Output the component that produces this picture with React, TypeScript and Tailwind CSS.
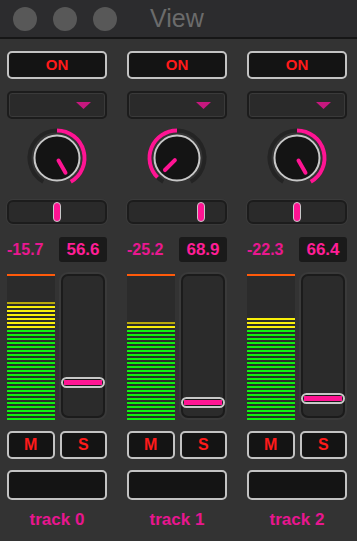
import React from 'react';

type Track = {
  name: string;
  knob: number; // angle in degrees, 0 = top, clockwise
  pan: number; // slider thumb position, 0..1
  level: string;
  gain: string;
  yellow: number;
  dim: boolean;
  fader: number; // thumb top offset in px
};

const tracks: Track[] = [
  { name: 'track 0', knob: 150, pan: 0.5, level: '-15.7', gain: '56.6', yellow: 6, dim: true, fader: 105 },
  { name: 'track 1', knob: -135, pan: 0.745, level: '-25.2', gain: '68.9', yellow: 1, dim: true, fader: 125 },
  { name: 'track 2', knob: 150, pan: 0.5, level: '-22.3', gain: '66.4', yellow: 3, dim: false, fader: 121 },
];

const MAGENTA = '#ff1493';

const polar = (cx: number, cy: number, r: number, a: number) => {
  const rad = (a * Math.PI) / 180;
  return [cx + r * Math.sin(rad), cy - r * Math.cos(rad)];
};

const arc = (cx: number, cy: number, r: number, a1: number, a2: number) => {
  const [x1, y1] = polar(cx, cy, r, a1);
  const [x2, y2] = polar(cx, cy, r, a2);
  const large = Math.abs(a2 - a1) > 180 ? 1 : 0;
  return `M ${x1} ${y1} A ${r} ${r} 0 ${large} 1 ${x2} ${y2}`;
};

const Knob: React.FC<{ angle: number }> = ({ angle }) => {
  const c = 32;
  const from = Math.min(0, angle);
  const to = Math.max(0, angle);
  const [px1, py1] = polar(c, c, 3, angle);
  const [px2, py2] = polar(c, c, 17, angle);
  return (
    <svg width="64" height="64" viewBox="0 0 64 64">
      <path d={arc(c, c, 27.5, -150, 150)} stroke="#242424" strokeWidth="4" fill="none" />
      <path d={arc(c, c, 27.5, from, to)} stroke={MAGENTA} strokeWidth="4" fill="none" />
      <circle cx={c} cy={c} r="22.5" fill="#141414" stroke="#c8c8c8" strokeWidth="2" />
      <line x1={px1} y1={py1} x2={px2} y2={py2} stroke={MAGENTA} strokeWidth="4" strokeLinecap="round" />
    </svg>
  );
};

const Meter: React.FC<{ yellow: number; dim: boolean }> = ({ yellow, dim }) => {
  const bars: string[] = [];
  for (let i = 0; i < 23; i++) bars.push('#10f010');
  for (let i = 0; i < yellow; i++) bars.push('#f8f00a');
  if (dim) bars.push('#b8aa0c');
  return (
    <div className="w-[48px] h-[146px] mt-[2px] bg-[#2b2b2b] flex flex-col">
      <div className="h-[2px] bg-[#ff5a0a]" />
      <div className="flex-1 flex flex-col-reverse gap-[1.5px]">
        {bars.map((c, i) => (
          <div key={i} className="h-[2.5px] shrink-0" style={{ backgroundColor: c }} />
        ))}
      </div>
    </div>
  );
};

const Fader: React.FC<{ top: number }> = ({ top }) => (
  <div className="relative w-[48px] h-[148px] rounded-[9px] bg-[#3a3a3a] p-[2px]">
    <div className="w-full h-full rounded-[7px] border-2 border-[#1b1b1b] bg-[#2b2b2b]" />
    <div
      className="absolute left-[2px] right-[2px] h-[11px] rounded-full border-2 border-[#c8c8c8] bg-[#1a1a1a] p-[1px] flex"
      style={{ top }}
    >
      <div className="flex-1 bg-[#ff1493]" />
    </div>
  </div>
);

const Column: React.FC<{ t: Track }> = ({ t }) => {
  const btn = 'rounded-[5px] border-2 border-[#c3c3c3] bg-[#141414]';
  return (
    <div className="w-[100px] flex flex-col items-center">
      <div className={`${btn} w-full h-[28px] mt-[12px] flex items-center justify-center text-[15px] font-bold text-[#ff1a1a]`}>
        ON
      </div>
      <div className="w-full h-[28px] mt-[12px] rounded-[5px] border-2 border-[#1c1c1c] bg-[#2a2a2a] shadow-[inset_0_0_0_1px_#3a3a3a] flex items-center justify-end pr-[14px]">
        <svg width="15" height="7" viewBox="0 0 15 7">
          <path d="M0 0 L15 0 L7.5 7 Z" fill="#c7187f" />
        </svg>
      </div>
      <div className="mt-[7px]">
        <Knob angle={t.knob} />
      </div>
      <div className="relative w-full h-[24px] mt-[10px] rounded-[6px] border-2 border-[#1c1c1c] bg-[#2a2a2a] shadow-[0_0_0_1px_#3a3a3a]">
        <div
          className="absolute top-0 w-[8px] h-[20px] -ml-[4px] rounded-full border-[1.5px] border-[#c8c8c8] bg-[#ff1493]"
          style={{ left: `${t.pan * 100}%` }}
        />
      </div>
      <div className="w-full h-[25px] mt-[13px] flex items-center gap-[4px]">
        <div className="w-[48px] text-[16px] font-bold text-[#e8188f] leading-none">{t.level}</div>
        <div className="w-[48px] h-full rounded-[3px] bg-[#1a1a1a] flex items-center justify-center text-[17px] font-bold text-[#ff1e96] leading-none">
          {t.gain}
        </div>
      </div>
      <div className="w-full mt-[10px] flex gap-[4px] items-start">
        <Meter yellow={t.yellow} dim={t.dim} />
        <Fader top={t.fader} />
      </div>
      <div className="w-full mt-[11px] flex gap-[5px]">
        <div className={`${btn} flex-1 h-[28px] flex items-center justify-center text-[16px] font-bold text-[#ff1a1a]`}>M</div>
        <div className={`${btn} flex-1 h-[28px] flex items-center justify-center text-[16px] font-bold text-[#ff1a1a]`}>S</div>
      </div>
      <div className={`${btn} w-full h-[30px] mt-[11px]`} />
      <div className="mt-[10px] text-[17px] leading-[20px] font-bold text-[#e8168f]">{t.name}</div>
    </div>
  );
};

export default function App() {
  return (
    <div className="w-[357px] h-[541px] bg-[#333333] overflow-hidden font-['Liberation_Sans',Arial,sans-serif]">
      <div className="h-[39px] bg-[#2c2c2e] border-b-2 border-[#161616] flex items-center relative">
        <div className="flex gap-[16px] pl-[13px]">
          <div className="w-[24px] h-[24px] rounded-full bg-[#585858]" />
          <div className="w-[24px] h-[24px] rounded-full bg-[#585858]" />
          <div className="w-[24px] h-[24px] rounded-full bg-[#585858]" />
        </div>
        <div className="ml-[33px] text-[25px] text-[#6b6b6b] leading-none">View</div>
      </div>
      <div className="flex gap-[20px] pl-[7px]">
        {tracks.map((t) => (
          <Column key={t.name} t={t} />
        ))}
      </div>
    </div>
  );
}
